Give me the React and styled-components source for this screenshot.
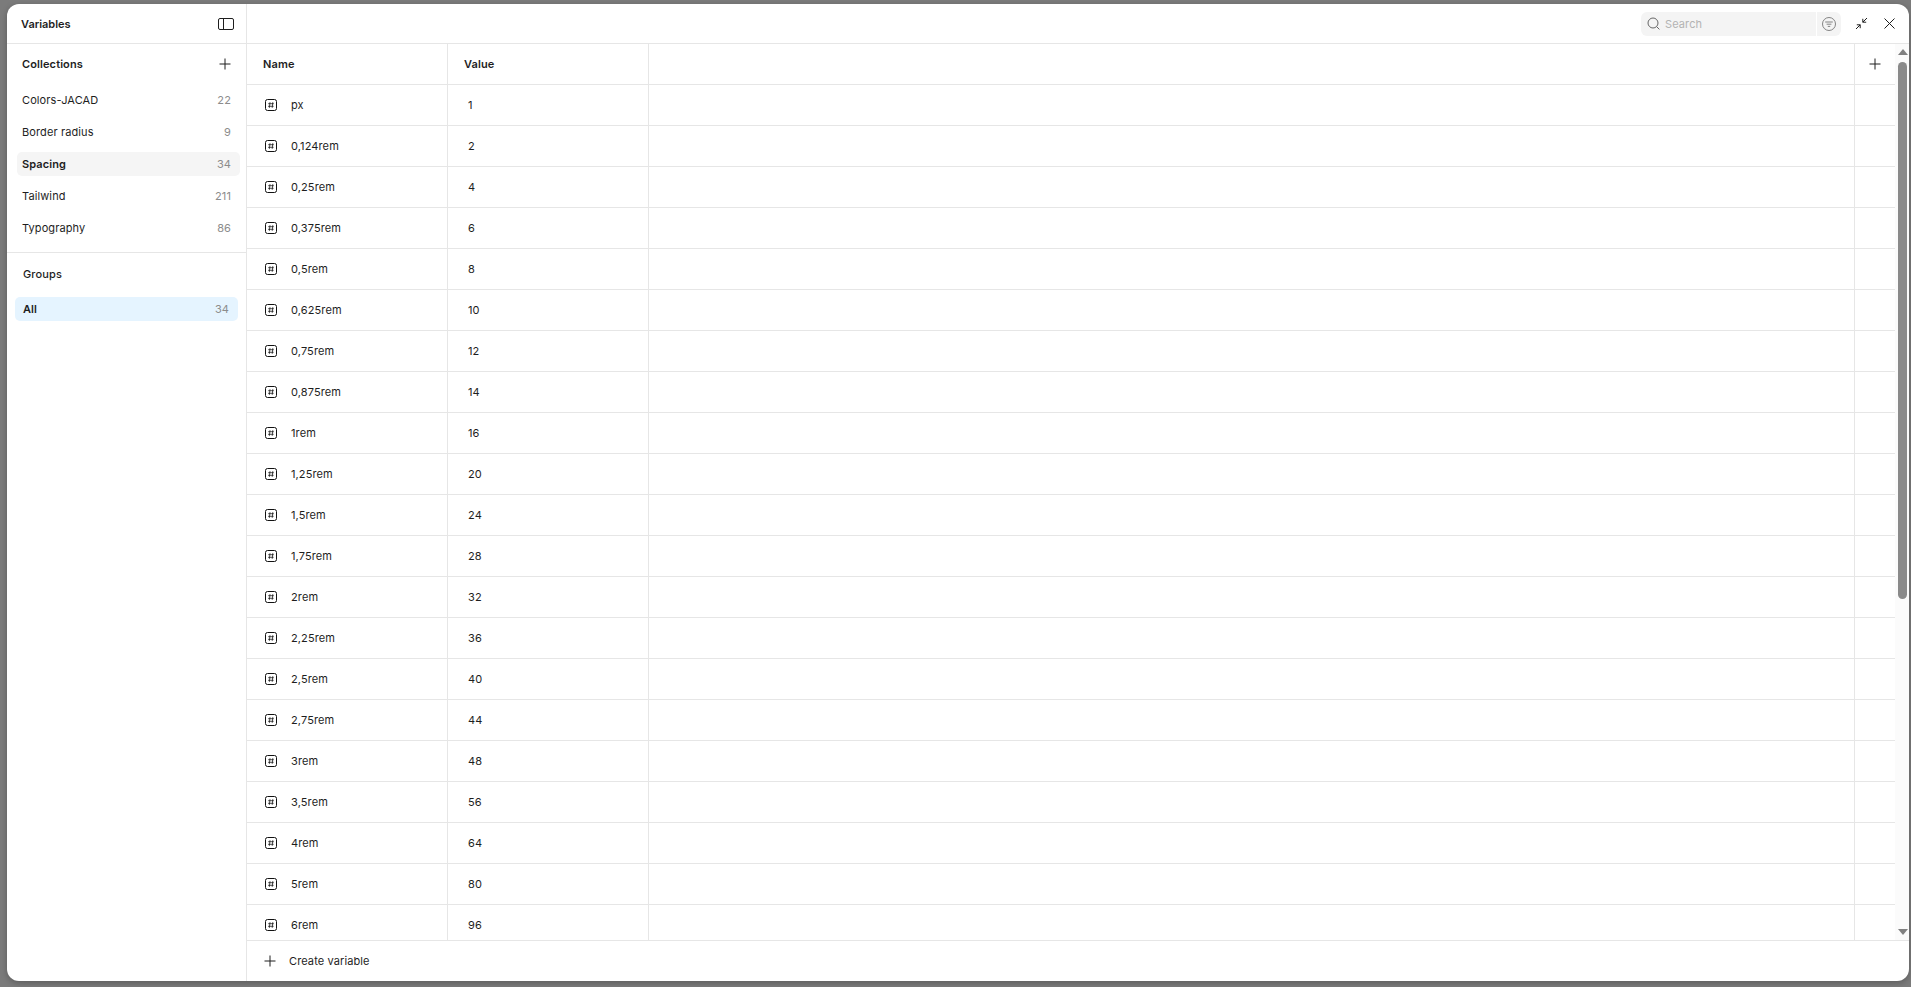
import React from "react";
import styled, { createGlobalStyle } from "styled-components";

const collections = [
  { name: "Colors-JACAD", count: 22 },
  { name: "Border radius", count: 9 },
  { name: "Spacing", count: 34, active: true },
  { name: "Tailwind", count: 211 },
  { name: "Typography", count: 86 },
];

const variables = [
  ["px", 1], ["0,124rem", 2], ["0,25rem", 4], ["0,375rem", 6], ["0,5rem", 8],
  ["0,625rem", 10], ["0,75rem", 12], ["0,875rem", 14], ["1rem", 16], ["1,25rem", 20],
  ["1,5rem", 24], ["1,75rem", 28], ["2rem", 32], ["2,25rem", 36], ["2,5rem", 40],
  ["2,75rem", 44], ["3rem", 48], ["3,5rem", 56], ["4rem", 64], ["5rem", 80],
  ["6rem", 96],
];

const PlusIcon = () => (
  <svg width="12" height="12" viewBox="0 0 12 12" fill="none" stroke="#1e1e1e" strokeWidth="1">
    <path d="M6 0.5v11M0.5 6h11" />
  </svg>
);

const HashIcon = () => (
  <svg width="12" height="12" viewBox="0 0 12 12" fill="none" stroke="#111">
    <rect x="0.5" y="0.5" width="11" height="11" rx="2" strokeWidth="1" />
    <path d="M5 3.2 4.4 8.8M7.8 3.2 7.2 8.8M3.2 4.7h5.6M3 7.3h5.6" strokeWidth="0.75" />
  </svg>
);

const PanelIcon = () => (
  <svg width="16" height="12" viewBox="0 0 16 12" fill="none" stroke="#1e1e1e" strokeWidth="1">
    <rect x="0.5" y="0.5" width="15" height="11" rx="1.5" />
    <path d="M5.5 0.5v11" />
  </svg>
);

const SearchIcon = () => (
  <svg width="13" height="13" viewBox="0 0 13 13" fill="none" stroke="#666" strokeWidth="1">
    <circle cx="6" cy="6" r="5" />
    <path d="M9.7 9.7 12.4 12.4" />
  </svg>
);

const FilterIcon = () => (
  <svg width="14" height="14" viewBox="0 0 14 14" fill="none" stroke="#777" strokeWidth="0.9">
    <circle cx="7" cy="7" r="6.5" />
    <path d="M3.2 5h7.6M4.6 7.2h4.8M5.8 9.4h2.4" />
  </svg>
);

const CollapseIcon = () => (
  <svg width="13" height="13" viewBox="0 0 13 13" fill="none" stroke="#1e1e1e" strokeWidth="1">
    <path d="M12 1 7.8 5.2M7.8 1.8v3.4h3.4M1 12l4.2-4.2M1.8 7.8h3.4v3.4" />
  </svg>
);

const CloseIcon = () => (
  <svg width="11" height="11" viewBox="0 0 11 11" fill="none" stroke="#1e1e1e" strokeWidth="1">
    <path d="M0.5 0.5l10 10M10.5 0.5l-10 10" />
  </svg>
);

const App = () => {
  return (
    <>
      <GlobalStyle />
      <Page>
        <Window>
          <Sidebar>
            <SidebarHeader>
              <Title>Variables</Title>
              <IconButton>
                <PanelIcon />
              </IconButton>
            </SidebarHeader>

            <CollectionsSection>
              <SectionHeading>
                <span>Collections</span>
                <PlusIcon />
              </SectionHeading>
              <CollectionList>
                {collections.map((item) => (
                  <CollectionItem key={item.name} $active={item.active}>
                    <ItemName $active={item.active}>{item.name}</ItemName>
                    <Count>{item.count}</Count>
                  </CollectionItem>
                ))}
              </CollectionList>
            </CollectionsSection>

            <GroupsHeading>Groups</GroupsHeading>
            <GroupItem>
              <ItemName $active>All</ItemName>
              <Count>34</Count>
            </GroupItem>
          </Sidebar>

          <Main>
            <Toolbar>
              <SearchBox>
                <SearchInput>
                  <SearchIcon />
                  <Placeholder>Search</Placeholder>
                </SearchInput>
                <FilterButton>
                  <FilterIcon />
                </FilterButton>
              </SearchBox>
              <WindowButtons>
                <CollapseIcon />
                <CloseIcon />
              </WindowButtons>
            </Toolbar>

            <TableArea>
              <Table>
                <Row>
                  <HeadCell>Name</HeadCell>
                  <HeadCell>Value</HeadCell>
                  <Cell />
                  <AddCell>
                    <PlusIcon />
                  </AddCell>
                </Row>
                {variables.map(([name, value]) => (
                  <Row key={name}>
                    <NameCell>
                      <HashIcon />
                      <span>{name}</span>
                    </NameCell>
                    <ValueCell>{value}</ValueCell>
                    <Cell />
                    <AddCell />
                  </Row>
                ))}
              </Table>
              <Scrollbar>
                <ArrowUp />
                <Thumb />
                <ArrowDown />
              </Scrollbar>
            </TableArea>

            <Footer>
              <PlusIcon />
              <span>Create variable</span>
            </Footer>
          </Main>
        </Window>
      </Page>
    </>
  );
};

const GlobalStyle = createGlobalStyle`
  html, body {
    margin: 0;
    height: 100%;
    overflow: hidden;
    background: #7b7b7b;
  }
  #root {
    height: 100%;
  }
`;

const Page = styled.div`
  box-sizing: border-box;
  height: 987px;
  padding: 4px 2px 6px 7px;
  font-family: Inter, "Liberation Sans", sans-serif;
  font-size: 11px;
  letter-spacing: 0.01em;
  color: #1e1e1e;
`;

const Window = styled.div`
  display: flex;
  height: 100%;
  background: #fff;
  border-radius: 12px;
  overflow: hidden;
  box-shadow: 0 2px 6px rgba(0, 0, 0, 0.25);
`;

const Sidebar = styled.aside`
  box-sizing: border-box;
  flex: 0 0 240px;
  border-right: 1px solid #e6e6e6;
`;

const SidebarHeader = styled.div`
  box-sizing: border-box;
  height: 40px;
  display: flex;
  align-items: center;
  justify-content: space-between;
  padding: 0 12px 0 14px;
  border-bottom: 1px solid #e6e6e6;
`;

const Title = styled.span`
  font-weight: 600;
  letter-spacing: 0;
`;

const IconButton = styled.span`
  display: flex;
`;

const CollectionsSection = styled.div`
  box-sizing: border-box;
  height: 209px;
  padding: 0 6px 0 10px;
  border-bottom: 1px solid #e6e6e6;
`;

const SectionHeading = styled.div`
  height: 40px;
  display: flex;
  align-items: center;
  justify-content: space-between;
  padding: 0 9px 0 5px;
  font-weight: 600;
`;

const CollectionList = styled.div`
  display: flex;
  flex-direction: column;
  gap: 8px;
  padding-top: 4px;
`;

const CollectionItem = styled.div`
  height: 24px;
  display: flex;
  align-items: center;
  justify-content: space-between;
  padding: 0 9px 0 5px;
  border-radius: 5px;
  background: ${({ $active }) => ($active ? "#f5f5f5" : "transparent")};
`;

const ItemName = styled.span`
  font-weight: ${({ $active }) => ($active ? 600 : 400)};
`;

const Count = styled.span`
  color: #8c8c8c;
`;

const GroupsHeading = styled.div`
  box-sizing: border-box;
  height: 43px;
  margin-bottom: 1px;
  padding: 0 0 1px 16px;
  display: flex;
  align-items: center;
  font-weight: 500;
`;

const GroupItem = styled.div`
  height: 24px;
  margin: 0 8px;
  display: flex;
  align-items: center;
  justify-content: space-between;
  padding: 0 9px 0 8px;
  border-radius: 5px;
  background: #e5f4ff;
`;

const Main = styled.main`
  flex: 1;
  min-width: 0;
  display: flex;
  flex-direction: column;
`;

const Toolbar = styled.div`
  box-sizing: border-box;
  flex: 0 0 40px;
  display: flex;
  align-items: center;
  justify-content: flex-end;
  padding-right: 14px;
  border-bottom: 1px solid #e6e6e6;
`;

const SearchBox = styled.div`
  display: flex;
  width: 200px;
  height: 24px;
  gap: 1px;
  border-radius: 6px;
  overflow: hidden;
`;

const SearchInput = styled.div`
  flex: 1;
  display: flex;
  align-items: center;
  gap: 5px;
  padding-left: 6px;
  background: #f4f4f4;
`;

const Placeholder = styled.span`
  color: #b3b3b3;
`;

const FilterButton = styled.div`
  flex: 0 0 24px;
  display: flex;
  align-items: center;
  justify-content: center;
  background: #f4f4f4;
`;

const WindowButtons = styled.div`
  display: flex;
  align-items: center;
  gap: 16px;
  margin-left: 14px;
`;

const TableArea = styled.div`
  flex: 1;
  min-height: 0;
  display: flex;
`;

const Table = styled.div`
  flex: 1;
  min-width: 0;
  overflow: hidden;
`;

const Row = styled.div`
  box-sizing: border-box;
  height: 41px;
  display: grid;
  grid-template-columns: 201px 201px 1fr 40px;
  border-bottom: 1px solid #e6e6e6;
`;

const Cell = styled.div`
  box-sizing: border-box;
  display: flex;
  align-items: center;
  border-right: 1px solid #e6e6e6;
`;

const HeadCell = styled(Cell)`
  padding-left: 16px;
  font-weight: 600;
`;

const NameCell = styled(Cell)`
  padding-left: 18px;
  gap: 14px;
`;

const ValueCell = styled(Cell)`
  padding-left: 20px;
`;

const AddCell = styled(Cell)`
  justify-content: center;
  border-right: none;
`;

const Scrollbar = styled.div`
  box-sizing: border-box;
  flex: 0 0 14px;
  padding-left: 1px;
  display: flex;
  flex-direction: column;
  align-items: center;
  background: #fbfbfb;
`;

const ArrowUp = styled.div`
  margin-top: 5px;
  border: 5px solid transparent;
  border-top: none;
  border-bottom: 6px solid #808080;
`;

const ArrowDown = styled.div`
  margin: auto 0 5px;
  border: 5px solid transparent;
  border-bottom: none;
  border-top: 6px solid #808080;
`;

const Thumb = styled.div`
  margin-top: 7px;
  width: 9px;
  height: 537px;
  border-radius: 5px;
  background: #8a8a8a;
`;

const Footer = styled.div`
  box-sizing: border-box;
  flex: 0 0 41px;
  display: flex;
  align-items: center;
  gap: 13px;
  padding-left: 17px;
  border-top: 1px solid #e6e6e6;
`;

export default App;
